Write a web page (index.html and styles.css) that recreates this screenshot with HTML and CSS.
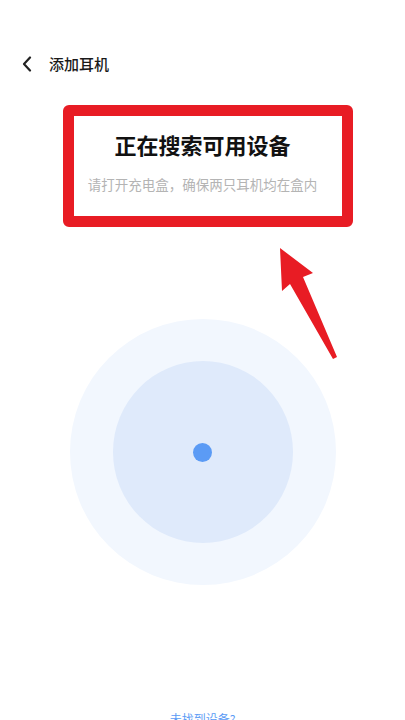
FILE: index.html
```html
<!DOCTYPE html>
<html lang="zh-CN">
<head>
<meta charset="utf-8">
<title>添加耳机</title>
<link rel="stylesheet" href="styles.css">
</head>
<body>
<div class="page">
  <div class="header">
    <svg class="back" width="10" height="16" viewBox="0 0 10 16"><path d="M8 1.5 L2 8 L8 14.5" fill="none" stroke="#222" stroke-width="2.2" stroke-linecap="round" stroke-linejoin="round"/></svg>
    <span class="title">添加耳机</span>
  </div>
  <div class="box">
    <div class="box-title">正在搜索可用设备</div>
    <div class="box-sub">请打开充电盒，确保两只耳机均在盒内</div>
  </div>
  <div class="radar">
    <div class="ring-outer">
      <div class="ring-inner">
        <div class="dot"></div>
      </div>
    </div>
  </div>
  <div class="link">未找到设备?</div>
  <svg class="arrow" width="405" height="720" viewBox="0 0 405 720"><polygon points="280,248 313,273 303,277 337,357 333,359 290,284 282,291" fill="#e81c24"/></svg>
</div>
</body>
</html>
```
FILE: styles.css
```css
html, body {
  margin: 0;
  padding: 0;
  background: #ffffff;
}
.page {
  position: relative;
  width: 405px;
  height: 720px;
  overflow: hidden;
  font-family: "Noto Sans CJK SC", "Noto Sans", sans-serif;
  background: #ffffff;
}
.header {
  display: flex;
  align-items: center;
  height: 28px;
  padding-top: 50px;
  padding-left: 22px;
}
.back {
  display: block;
}
.title {
  margin-left: 17px;
  font-size: 15px;
  font-weight: 500;
  color: #1a1a1a;
  line-height: 28px;
}
.box {
  box-sizing: border-box;
  margin-top: 27px;
  margin-left: 63px;
  width: 290px;
  height: 122px;
  border: 11px solid #e81c24;
  border-radius: 6px;
  background: #ffffff;
  display: flex;
  flex-direction: column;
  align-items: center;
  padding-top: 13px;
  padding-right: 11px;
}
.box-title {
  font-size: 22px;
  font-weight: 700;
  line-height: 30px;
  color: #111111;
}
.box-sub {
  margin-top: 15px;
  font-size: 13.5px;
  line-height: 20px;
  color: #b4b4b4;
}
.radar {
  display: flex;
  justify-content: center;
  margin-top: 92px;
}
.ring-outer {
  width: 266px;
  height: 266px;
  border-radius: 50%;
  background: #f2f7fe;
  display: flex;
  align-items: center;
  justify-content: center;
}
.ring-inner {
  width: 180px;
  height: 182px;
  border-radius: 50%;
  background: #dfeafb;
  display: flex;
  align-items: center;
  justify-content: center;
}
.dot {
  width: 19px;
  height: 19px;
  border-radius: 50%;
  background: #5b9bf5;
}
.link {
  margin-top: 125px;
  text-align: center;
  font-size: 12px;
  line-height: 18px;
  color: #5b9bf5;
}
.arrow {
  position: absolute;
  left: 0;
  top: 0;
  pointer-events: none;
}
```
